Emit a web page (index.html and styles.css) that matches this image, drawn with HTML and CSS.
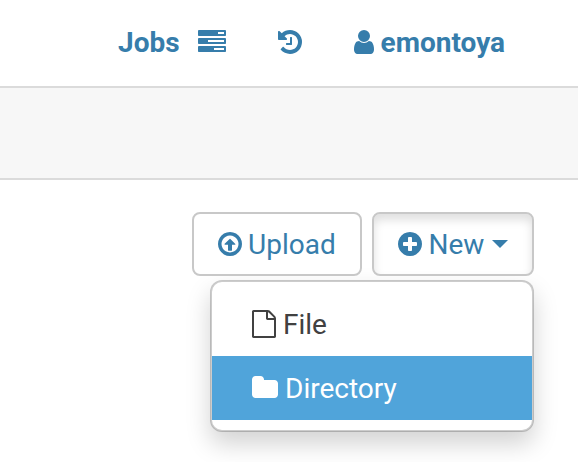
FILE: index.html
```html
<!DOCTYPE html>
<html lang="en">
<head>
<meta charset="utf-8">
<title>Files</title>
<link rel="stylesheet" href="styles.css">
</head>
<body>
<nav class="navbar">
  <a class="jobs">Jobs
    <svg class="tasks" viewBox="0 0 1792 1792"><path d="M1024 1408h640v-128h-640v128zM640 896h1024v-128h-1024v128zM1280 384h384v-128h-384v128zM1792 1216v256q0 26-19 45t-45 19h-1664q-26 0-45-19t-19-45v-256q0-26 19-45t45-19h1664q26 0 45 19t19 45zM1792 704v256q0 26-19 45t-45 19h-1664q-26 0-45-19t-19-45v-256q0-26 19-45t45-19h1664q26 0 45 19t19 45zM1792 192v256q0 26-19 45t-45 19h-1664q-26 0-45-19t-19-45v-256q0-26 19-45t45-19h1664q26 0 45 19t19 45z"/></svg>
  </a>
  <a class="history" aria-label="History">
    <svg viewBox="0 0 1536 1792"><path d="M1536 896q0 156-61 298t-164 245-245 164-298 61q-172 0-327-72.500t-264-204.500q-7-10-6.500-22.500t8.500-20.500l137-138q10-9 25-9 16 2 23 12 73 95 179 147t225 52q104 0 198.500-40.500t163.500-109.500 109.500-163.500 40.500-198.500-40.500-198.500-109.500-163.500-163.500-109.500-198.500-40.500q-98 0-188 35.500t-160 101.500l137 138q31 30 14 69-17 40-59 40h-448q-26 0-45-19t-19-45v-448q0-42 40-59 39-17 69 14l130 129q107-101 244.500-156.500t284.500-55.500q156 0 298 61t245 164 164 245 61 298zM896 608v448q0 14-9 23t-23 9h-320q-14 0-23-9t-9-23v-64q0-14 9-23t23-9h224v-352q0-14 9-23t23-9h64q14 0 23 9t9 23z"/></svg>
  </a>
  <a class="user">
    <svg viewBox="0 0 1280 1792"><path d="M1280 1399q0 109-62.500 187t-150.500 78h-854q-88 0-150.500-78t-62.500-187q0-85 8.500-160.500t31.500-152 58.500-131 94-89 134.500-34.500q131 128 313 128t313-128q76 0 134.500 34.500t94 89 58.500 131 31.500 152 8.500 160.500zM1024 512q0 159-112.500 271.500t-271.500 112.500-271.500-112.500-112.500-271.500 112.500-271.500 271.500-112.500 271.500 112.500 112.500 271.500z"/></svg>
    <span>emontoya</span>
  </a>
</nav>
<div class="band"></div>
<main>
  <div class="toolbar">
    <button class="button upload">
      <svg viewBox="0 0 1536 1792"><path d="M1118 911q0 14-9 23t-23 9h-190v352q0 13-9.500 22.500t-22.500 9.500h-192q-13 0-22.500-9.500t-9.500-22.500v-352h-192q-14 0-23-9t-9-23q0-12 10-24l319-319q10-9 23-9t23 9l320 320q9 9 9 23zM768 352q-148 0-273 73t-198 198-73 273 73 273 198 198 273 73 273-73 198-198 73-273-73-273-198-198-273-73zM1536 896q0 209-103 385.500t-279.500 279.500-385.500 103-385.500-103-279.500-279.500-103-385.500 103-385.500 279.500-279.500 385.500-103 385.500 103 279.500 279.500 103 385.500z"/></svg>
      <span>Upload</span>
    </button>
    <button class="button new">
      <svg viewBox="0 0 1536 1792"><path d="M1216 960v-128q0-26-19-45t-45-19h-256v-256q0-26-19-45t-45-19h-128q-26 0-45 19t-19 45v256h-256q-26 0-45 19t-19 45v128q0 26 19 45t45 19h256v256q0 26 19 45t45 19h128q26 0 45-19t19-45v-256h256q26 0 45-19t19-45zM1536 896q0 209-103 385.500t-279.500 279.500-385.500 103-385.500-103-279.500-279.500-103-385.500 103-385.500 279.500-279.500 385.500-103 385.500 103 279.500 279.500 103 385.500z"/></svg>
      <span>New</span><i class="caret"></i>
    </button>
  </div>
  <div class="menu">
    <a class="item">
      <svg class="file" viewBox="0 0 1536 1792"><path d="M1468 380q28 28 48 76t20 88v1152q0 40-28 68t-68 28h-1344q-40 0-68-28t-28-68v-1600q0-40 28-68t68-28h896q40 0 88 20t76 48zM1024 136v376h376q-10-29-22-41l-313-313q-12-12-41-22zM1408 1664v-1024h-416q-40 0-68-28t-28-68v-416h-768v1536h1280z"/></svg>
      <span>File</span>
    </a>
    <a class="item active">
      <svg class="folder" viewBox="0 0 1664 1792"><path d="M1664 608v704q0 92-66 158t-158 66h-1216q-92 0-158-66t-66-158v-960q0-92 66-158t158-66h320q92 0 158 66t66 158v32h672q92 0 158 66t66 158z"/></svg>
      <span>Directory</span>
    </a>
  </div>
</main>
</body>
</html>
```
FILE: styles.css
```css
* { box-sizing: border-box; }
body {
  margin: 0;
  min-height: 100vh;
  background: #fff;
  color: #414141;
  font: 28px/40px Roboto, sans-serif;
}
svg { display: block; flex: none; height: 28px; fill: currentColor; }
.navbar {
  display: flex;
  align-items: center;
  height: 86px;
  padding: 0 73px 0 118px;
  color: #367dab;
  font-weight: 700;
}
.navbar a { display: flex; align-items: center; }
.navbar svg { margin-bottom: 2px; }
.jobs { gap: 18px; }
.tasks { width: 28px; }
.history { margin-left: 52px; }
.history svg { width: 24px; }
.user { margin-left: 52px; gap: 7px; }
.user svg { width: 20px; }
.band {
  height: 94px;
  background: #f7f7f7;
  border: solid #dbdbdb;
  border-width: 2px 0;
}
main { height: 282px; padding: 32px 44px 0 192px; }
.toolbar { display: flex; gap: 10px; }
.button {
  display: flex;
  align-items: center;
  height: 64px;
  padding: 0 24px;
  border: 2px solid #c8c8c8;
  border-radius: 8px;
  background: #fff;
  color: #367dab;
  font: inherit;
}
.button svg { width: 24px; margin-right: 6.5px; }
.button span, .item span { padding-top: 2px; }
.upload { width: 170px; }
.upload svg { margin-left: -0.5px; }
.new { width: 162px; box-shadow: inset 0 6px 10px rgba(0, 0, 0, .125); }
.caret {
  margin-left: 7.5px;
  border: 8px solid transparent;
  border-top-color: currentColor;
  border-bottom: 0;
}
.menu {
  width: 324px;
  height: 152px;
  margin: 4px 0 0 18px;
  padding: 10px 0;
  border: 2px solid rgba(0, 0, 0, .2);
  border-radius: 12px;
  background: #fff;
  background-clip: padding-box;
  box-shadow: 0 12px 24px rgba(0, 0, 0, .175);
}
.item { display: flex; align-items: center; height: 64px; padding: 0 40px; }
.item svg { margin-right: 7px; }
.file { width: 24px; }
.folder { width: 26px; }
.active { background: #50a4da; color: #fff; }
```
